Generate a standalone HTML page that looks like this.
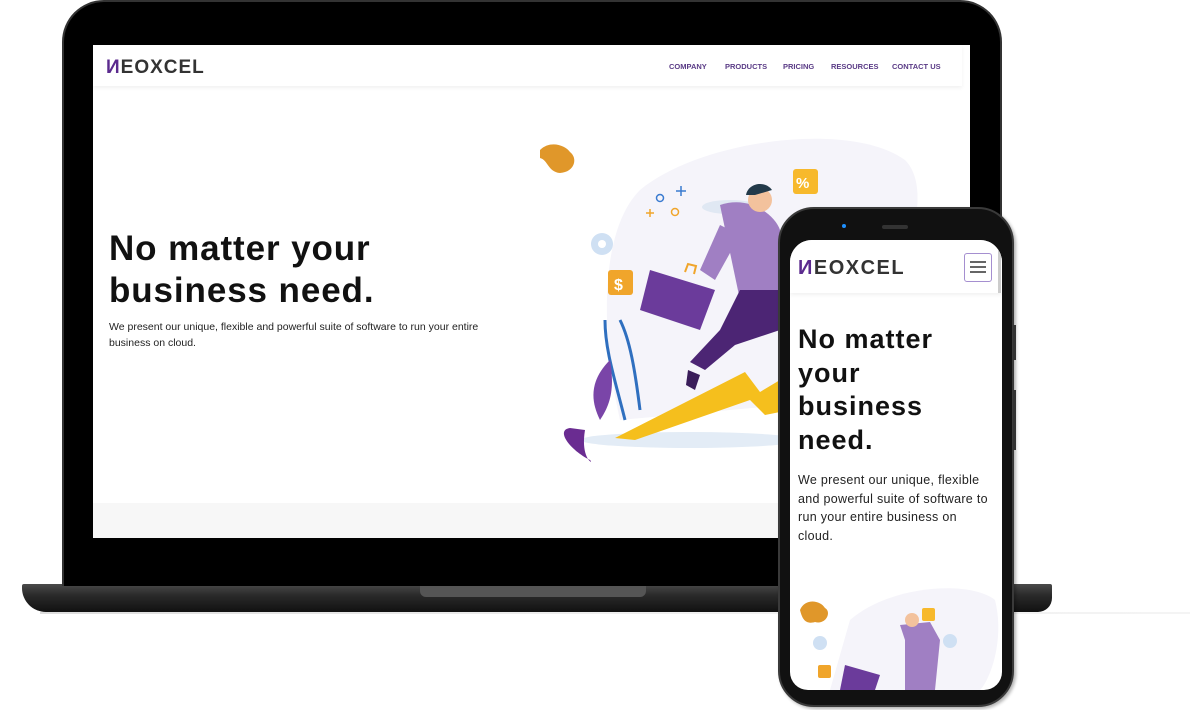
<!DOCTYPE html>
<html><head><meta charset="utf-8"><style>
*{margin:0;padding:0;box-sizing:border-box}
body{width:1200px;height:710px;background:#fff;position:relative;overflow:hidden;font-family:"Liberation Sans",Arial,sans-serif}
.abs{position:absolute}
.logo{font-weight:bold;color:#333;letter-spacing:1px}
.logo b{color:#5b2a8e}
.nav span{position:absolute;font-size:7.5px;font-weight:bold;color:#5a3b86;top:62px}
h1{font-weight:bold;color:#111}
</style></head><body>
<!-- laptop base -->
<div class="abs" style="left:22px;top:584px;width:1030px;height:28px;background:linear-gradient(#4a4a4a,#2a2a2a 40%,#111);border-radius:2px 2px 14px 24px"></div>
<div class="abs" style="left:420px;top:584px;width:226px;height:13px;background:#555;border-radius:0 0 6px 6px"></div>
<div class="abs" style="left:40px;top:612px;width:1150px;height:2px;background:linear-gradient(90deg,#ddd,#eee,#f4f4f4)"></div>
<!-- laptop lid -->
<div class="abs" style="left:62px;top:0;width:940px;height:586px;background:#000;border-radius:42px 42px 0 0;border:2px solid #333;border-bottom:none"></div>
<div class="abs" style="left:93px;top:45px;width:877px;height:493px;background:#fff;overflow:hidden">
  <div class="abs" style="left:0;top:0;width:869px;height:41px;background:#fff;box-shadow:0 2px 4px rgba(0,0,0,.06)"></div>
  <div class="abs logo" style="left:13px;top:12px;font-size:19px"><b>И</b>EOXCEL</div>
  <div class="nav">
    <span style="left:576px;top:17px">COMPANY</span>
    <span style="left:632px;top:17px">PRODUCTS</span>
    <span style="left:690px;top:17px">PRICING</span>
    <span style="left:738px;top:17px">RESOURCES</span>
    <span style="left:799px;top:17px">CONTACT US</span>
  </div>
  <h1 class="abs" style="left:16px;top:183px;font-size:35px;line-height:42px;letter-spacing:0.9px">No matter your<br>business need.</h1>
  <p class="abs" style="left:16px;top:275px;font-size:10.5px;line-height:15.5px;color:#222;width:400px">We present our unique, flexible and powerful suite of software to run your entire business on cloud.</p>
  <div class="abs" style="left:0;top:458px;width:877px;height:35px;background:#f7f7f7"></div>
</div>
<!-- illustration laptop -->
<svg class="abs" style="left:0;top:0" width="1200" height="710">
  <path d="M640 190 C700 140 850 120 905 160 C945 200 880 330 840 400 L620 420 C600 330 600 230 640 190Z" fill="#f5f4fa"/>
  <path d="M540 150 C550 140 565 145 570 152 C578 158 575 172 560 173 C548 172 548 160 540 158Z" fill="#e0972a"/>
  <rect x="793" y="169" width="25" height="25" rx="3" fill="#f7b92c"/><text x="796" y="188" font-size="15" font-weight="bold" fill="#fff">%</text>
  <rect x="608" y="270" width="25" height="25" rx="3" fill="#f0a52b"/><text x="614" y="290" font-size="16" font-weight="bold" fill="#fff">$</text>
  <circle cx="602" cy="244" r="11" fill="#cfe0f3"/><circle cx="602" cy="244" r="4" fill="#fff"/>
  <circle cx="660" cy="198" r="3.5" fill="none" stroke="#3a7bd0" stroke-width="1.5"/>
  <circle cx="675" cy="212" r="3.5" fill="none" stroke="#f0a52b" stroke-width="1.5"/>
  <path d="M681 186v10M676 191h10" stroke="#3a7bd0" stroke-width="1.5"/>
  <path d="M650 209v8M646 213h8" stroke="#f0a52b" stroke-width="1.5"/>
  <ellipse cx="730" cy="207" rx="28" ry="7" fill="#e0e8f3"/>
  <ellipse cx="690" cy="440" rx="110" ry="8" fill="#e3ecf6"/>
  <path d="M615 438 L745 372 L760 392 L780 380 L780 412 L765 415 L750 400 L635 440Z" fill="#f5bf1d"/>
  <path d="M585 430 C580 460 595 465 590 460 C570 450 555 430 570 428Z" fill="#6a2c91"/>
  <path d="M625 420 C615 380 605 350 605 320 M640 410 C635 370 630 340 620 320" stroke="#2f6fbf" stroke-width="3" fill="none"/>
  <path d="M600 420 C590 400 590 380 610 360 C615 390 610 405 600 420Z" fill="#7a45a8"/>
  <path d="M720 205 C750 195 775 215 780 230 L780 300 L740 300 Z" fill="#a07fc3"/>
  <path d="M700 270 L720 225 L740 235 L715 280Z" fill="#a07fc3"/>
  <circle cx="760" cy="200" r="12" fill="#f3c29d"/><path d="M746 195 C748 183 765 180 772 190 L755 195Z" fill="#233a4a"/>
  <path d="M740 290 L780 290 L780 330 L735 345 L705 370 L690 362 L720 330Z" fill="#4c2574"/>
  <path d="M688 370 L700 375 L695 390 L686 385Z" fill="#3a1d5a"/>
  <path d="M650 270 L715 290 L700 330 L640 310Z" fill="#6b3b9b"/>
  <path d="M685 272 L688 264 L696 266 L694 274" stroke="#f0a52b" stroke-width="2" fill="none"/>
</svg>
<!-- phone -->
<div class="abs" style="left:778px;top:207px;width:236px;height:500px;background:#111;border-radius:36px;border:2px solid #3a3a3a;box-shadow:2px 2px 3px rgba(0,0,0,.3)"></div>
<div class="abs" style="left:1013px;top:325px;width:3px;height:35px;background:#333"></div>
<div class="abs" style="left:1013px;top:390px;width:3px;height:60px;background:#333"></div>
<div class="abs" style="left:842px;top:224px;width:4px;height:4px;border-radius:50%;background:#1e90ff"></div>
<div class="abs" style="left:882px;top:225px;width:26px;height:4px;border-radius:2px;background:#333"></div>
<div class="abs" style="left:790px;top:240px;width:212px;height:450px;background:#fff;border-radius:22px 22px 18px 18px;overflow:hidden">
  <div class="abs" style="left:0;top:0;width:212px;height:53px;background:#fff;box-shadow:0 2px 4px rgba(0,0,0,.06)"></div>
  <div class="abs logo" style="left:8px;top:17px;font-size:20px;letter-spacing:1.5px"><b>И</b>EOXCEL</div>
  <div class="abs" style="left:174px;top:13px;width:28px;height:29px;border:1.5px solid #a58fd0;border-radius:3px"></div>
  <div class="abs" style="left:180px;top:21px;width:16px;height:1.5px;background:#666;box-shadow:0 5px 0 #666,0 10px 0 #666"></div>
  <div class="abs" style="left:208px;top:0;width:3px;height:53px;background:#ccc"></div>
  <h1 class="abs" style="left:8px;top:83px;font-size:27px;line-height:33.5px;letter-spacing:1px">No matter<br>your<br>business<br>need.</h1>
  <p class="abs" style="left:8px;top:231px;font-size:12.5px;line-height:18.5px;color:#222;width:192px;letter-spacing:0.3px">We present our unique, flexible and powerful suite of software to run your entire business on cloud.</p>
  <svg class="abs" style="left:0;top:340px" width="212" height="110">
    <path d="M60 40 C100 5 180 0 205 20 C215 60 200 100 190 110 L40 110Z" fill="#f5f4fa"/>
    <path d="M10 30 C15 18 30 20 35 28 C42 32 36 45 25 42 C15 45 12 38 10 30Z" fill="#e0972a"/>
    <rect x="132" y="28" width="13" height="13" rx="2" fill="#f7b92c"/>
    <rect x="28" y="85" width="13" height="13" rx="2" fill="#f0a52b"/>
    <path d="M110 45 L140 42 L150 60 L145 110 L115 110 L115 60Z" fill="#a07fc3"/>
    <circle cx="122" cy="40" r="7" fill="#f3c29d"/>
    <path d="M55 85 L90 95 L85 110 L50 110Z" fill="#6b3b9b"/>
    <circle cx="160" cy="61" r="7" fill="#cfe0f3"/>
    <circle cx="30" cy="63" r="7" fill="#cfe0f3"/>
  </svg>
</div>
</body></html>
